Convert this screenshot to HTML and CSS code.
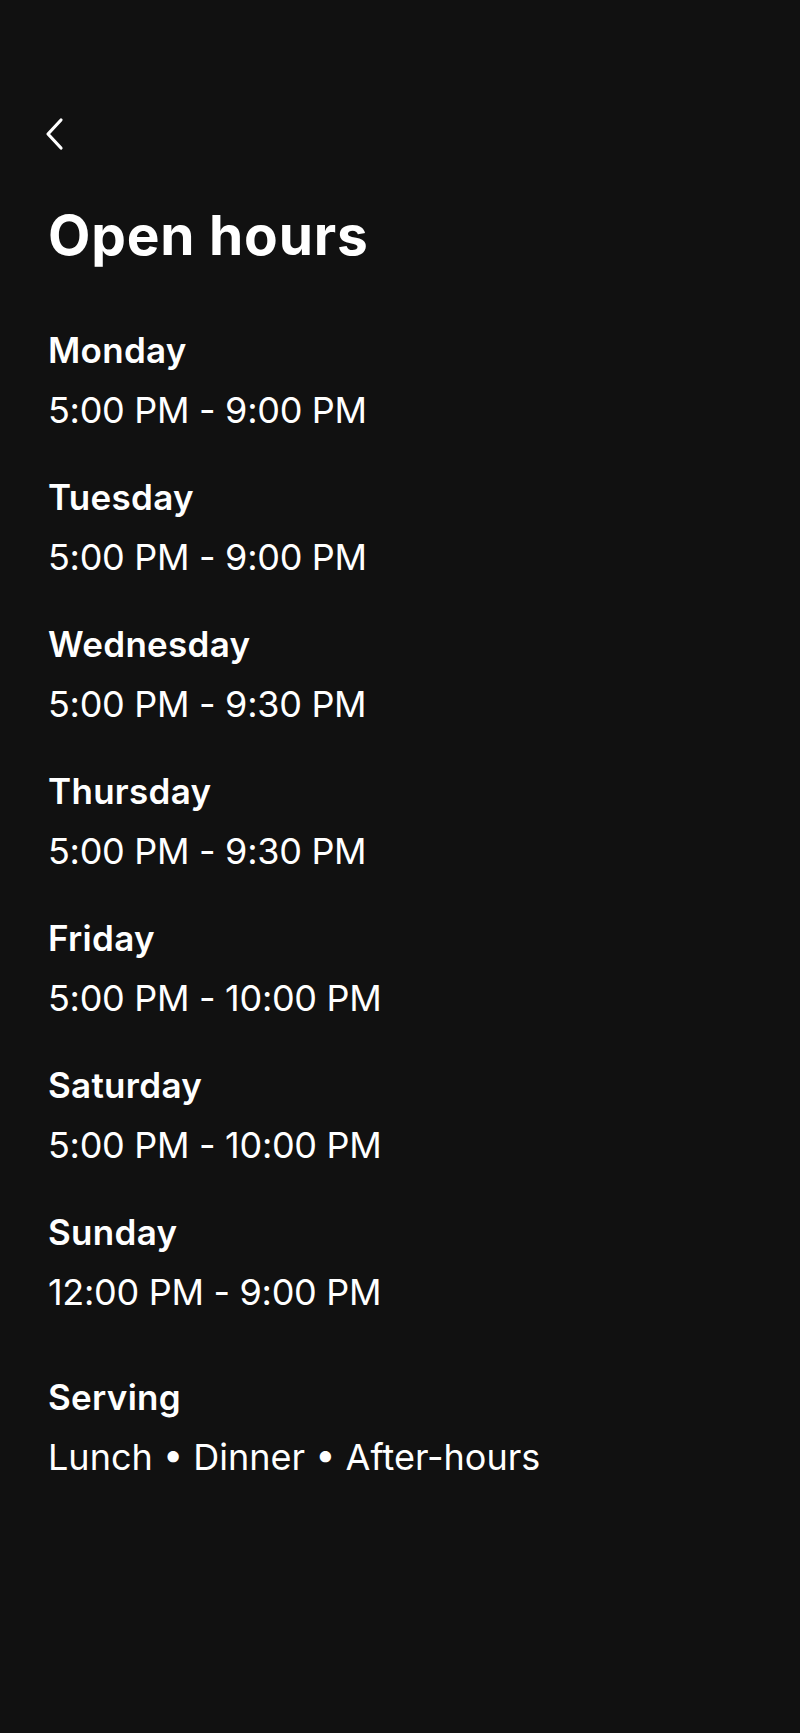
FILE: index.html
```html
<!DOCTYPE html>
<html lang="en">
<head>
<meta charset="utf-8">
<title>Open hours</title>
<link rel="stylesheet" href="styles.css">
</head>
<body>
<main class="page">
  <button class="back" aria-label="Back">
    <svg width="24" height="34" viewBox="0 0 24 34" fill="none" stroke="#fff" stroke-width="3.2" stroke-linecap="round" stroke-linejoin="round"><path d="M17 3 L4 17 L17 31"/></svg>
  </button>
  <h1 class="title">Open hours</h1>
  <section class="hours">
    <div class="entry"><div class="day">Monday</div><div class="time">5:00 PM - 9:00 PM</div></div>
    <div class="entry"><div class="day">Tuesday</div><div class="time">5:00 PM - 9:00 PM</div></div>
    <div class="entry"><div class="day">Wednesday</div><div class="time">5:00 PM - 9:30 PM</div></div>
    <div class="entry"><div class="day">Thursday</div><div class="time">5:00 PM - 9:30 PM</div></div>
    <div class="entry"><div class="day">Friday</div><div class="time">5:00 PM - 10:00 PM</div></div>
    <div class="entry"><div class="day">Saturday</div><div class="time">5:00 PM - 10:00 PM</div></div>
    <div class="entry"><div class="day">Sunday</div><div class="time">12:00 PM - 9:00 PM</div></div>
  </section>
  <section class="serving">
    <div class="day">Serving</div>
    <div class="time meals">Lunch • Dinner • After-hours</div>
  </section>
</main>
</body>
</html>
```
FILE: styles.css
```css
html, body {
  margin: 0;
  background: #111111;
  color: #ffffff;
  font-family: Inter, "Noto Sans", sans-serif;
}
.page {
  padding: 117px 48px 0;
  display: flex;
  flex-direction: column;
}
.back {
  background: none;
  border: 0;
  padding: 0;
  margin-left: -4px;
  width: 24px;
  height: 34px;
  display: block;
}
.title {
  margin: 52px 0 0;
  font-size: 55px;
  line-height: 64px;
  font-weight: 700;
  letter-spacing: 0.8px;
}
.hours {
  margin-top: 53px;
  display: flex;
  flex-direction: column;
  gap: 27px;
}
.day {
  font-size: 35px;
  line-height: 60px;
  font-weight: 600;
  letter-spacing: 0.3px;
}
.time {
  font-size: 36px;
  line-height: 60px;
  font-weight: 400;
  letter-spacing: -0.3px;
}
.meals {
  letter-spacing: 0;
}
.serving {
  margin-top: 45px;
}
```
